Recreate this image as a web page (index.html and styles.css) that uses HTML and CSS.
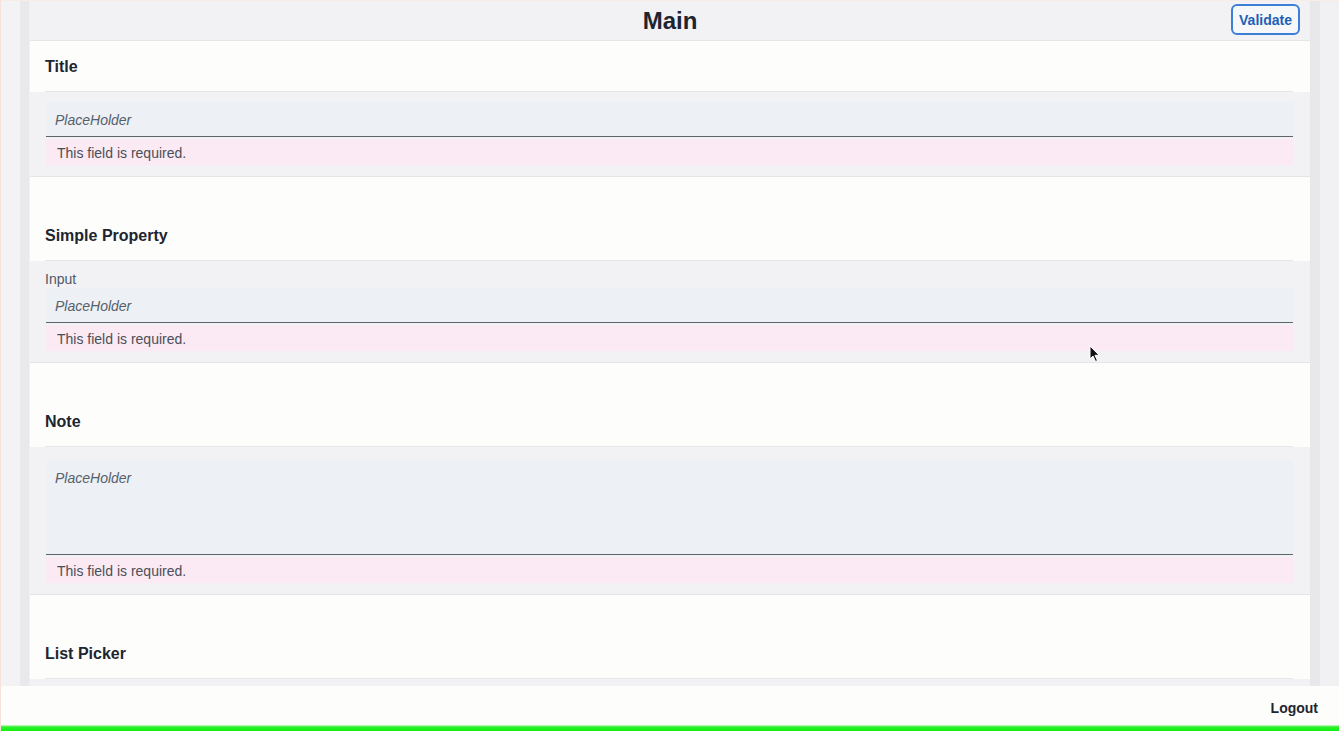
FILE: index.html
```html
<!DOCTYPE html>
<html lang="en">
<head>
<meta charset="utf-8">
<title>Main</title>
<link rel="stylesheet" href="styles.css">
</head>
<body>
<div class="app">
  <div class="shell">
    <div class="gutter gutter-left"></div>
    <main class="main">
      <header class="topbar">
        <h1 class="topbar-title">Main</h1>
        <button class="btn-validate" type="button">Validate</button>
      </header>
      <div class="content">
        <section class="section first">
          <div class="section-head"><h2 class="section-title">Title</h2></div>
          <div class="section-body">
            <div class="input">PlaceHolder</div>
            <div class="error">This field is required.</div>
          </div>
        </section>
        <section class="section">
          <div class="section-head"><h2 class="section-title">Simple Property</h2></div>
          <div class="section-body">
            <div class="field-label">Input</div>
            <div class="input">PlaceHolder</div>
            <div class="error">This field is required.</div>
          </div>
        </section>
        <section class="section">
          <div class="section-head"><h2 class="section-title">Note</h2></div>
          <div class="section-body">
            <div class="input textarea">PlaceHolder</div>
            <div class="error">This field is required.</div>
          </div>
        </section>
        <section class="section">
          <div class="section-head"><h2 class="section-title">List Picker</h2></div>
          <div class="section-body empty"></div>
        </section>
      </div>
    </main>
    <div class="gutter gutter-right"></div>
  </div>
  <footer class="footer">
    <span class="logout">Logout</span>
  </footer>
  <div class="greenbar"></div>
  <svg class="cursor" width="12" height="18" viewBox="0 0 12 18" aria-hidden="true">
    <path d="M1 1 L1 14 L4 11 L6.5 16.5 L8.5 15.6 L6 10.3 L10.2 10.3 Z" fill="#111" stroke="#fff" stroke-width="1"/>
  </svg>
</div>
</body>
</html>
```
FILE: styles.css
```css
* { box-sizing: border-box; }
html, body { margin: 0; padding: 0; }
body {
  font-family: "Liberation Sans", Arial, sans-serif;
  background: #f2f2f4;
  color: #1d2d3e;
  width: 1339px;
  height: 731px;
  overflow: hidden;
}
.app {
  position: relative;
  height: 731px;
  display: flex;
  flex-direction: column;
  border-left: 1px solid #f6e2d8;
  border-top: 1px solid #f8ece6;
}
.shell {
  flex: 1;
  min-height: 0;
  display: flex;
}
.gutter-left {
  width: 29px;
  background: linear-gradient(to right, #f3f3f5 0, #f3f3f5 19px, #e9e9eb 19px, #e9e9eb 28px, #f0f0f2 28px);
}
.gutter-right {
  width: 29px;
  background: linear-gradient(to right, #e8e8ea 0, #e8e8ea 10px, #f1f1f3 10px);
}
.main {
  width: 1280px;
  display: flex;
  flex-direction: column;
  overflow: hidden;
}
.topbar {
  height: 40px;
  flex: none;
  display: flex;
  align-items: center;
  justify-content: center;
  position: relative;
  background: #f2f2f4;
  border-bottom: 1px solid #e6e6e8;
}
.topbar-title {
  margin: 0;
  font-size: 24px;
  font-weight: 700;
  color: #1d2530;
  line-height: 30px;
}
.btn-validate {
  position: absolute;
  right: 10px;
  top: 3px;
  height: 31px;
  width: 69px;
  padding: 0;
  border: 2px solid #3b7fd8;
  border-radius: 6px;
  background: #f6f7f9;
  color: #1f5fb5;
  font-family: "Liberation Sans", Arial, sans-serif;
  font-size: 14px;
  font-weight: 700;
}
.content {
  flex: 1;
  min-height: 0;
  overflow: hidden;
}
.section-head {
  background: #fdfdfc;
  padding: 49px 17px 0 15px;
}
.section.first .section-head { padding-top: 16px; }
.section-title {
  margin: 0;
  font-size: 16px;
  font-weight: 700;
  line-height: 20px;
  color: #1d2530;
  padding-bottom: 14px;
  border-bottom: 1px solid #e6e6e8;
}
.section-body {
  background: #f2f2f4;
  padding: 10px 17px 11px 16px;
  border-bottom: 1px solid #e4e4e6;
}
.section-body.empty {
  height: 40px;
  border-bottom: 0;
}
.field-label {
  font-size: 14px;
  line-height: 16px;
  color: #4f5866;
  margin: 0 0 1px -1px;
}
.input {
  height: 35px;
  background: #edf0f4;
  border-bottom: 1.5px solid #5f646b;
  padding: 2px 9px 0;
  font-size: 14px;
  font-style: italic;
  color: #56606c;
  line-height: 32px;
}
.textarea {
  height: 94px;
  margin-top: 4px;
  line-height: 18px;
  padding-top: 8px;
}
.error {
  margin-top: 2px;
  height: 26px;
  background: #fbe9f3;
  padding: 0 11px;
  font-size: 14px;
  line-height: 28px;
  color: #4a4f57;
}
.footer {
  height: 39px;
  flex: none;
  background: #fdfdfb;
  display: flex;
  align-items: center;
  justify-content: flex-end;
  padding: 5px 21px 0 0;
}
.logout {
  font-size: 14px;
  font-weight: 700;
  color: #1d2530;
}
.greenbar {
  height: 6px;
  flex: none;
  background: linear-gradient(to bottom, #d8fbd8 0, #2af02a 2px, #10f010 100%);
}
.cursor {
  position: absolute;
  left: 1088px;
  top: 344px;
}
```
